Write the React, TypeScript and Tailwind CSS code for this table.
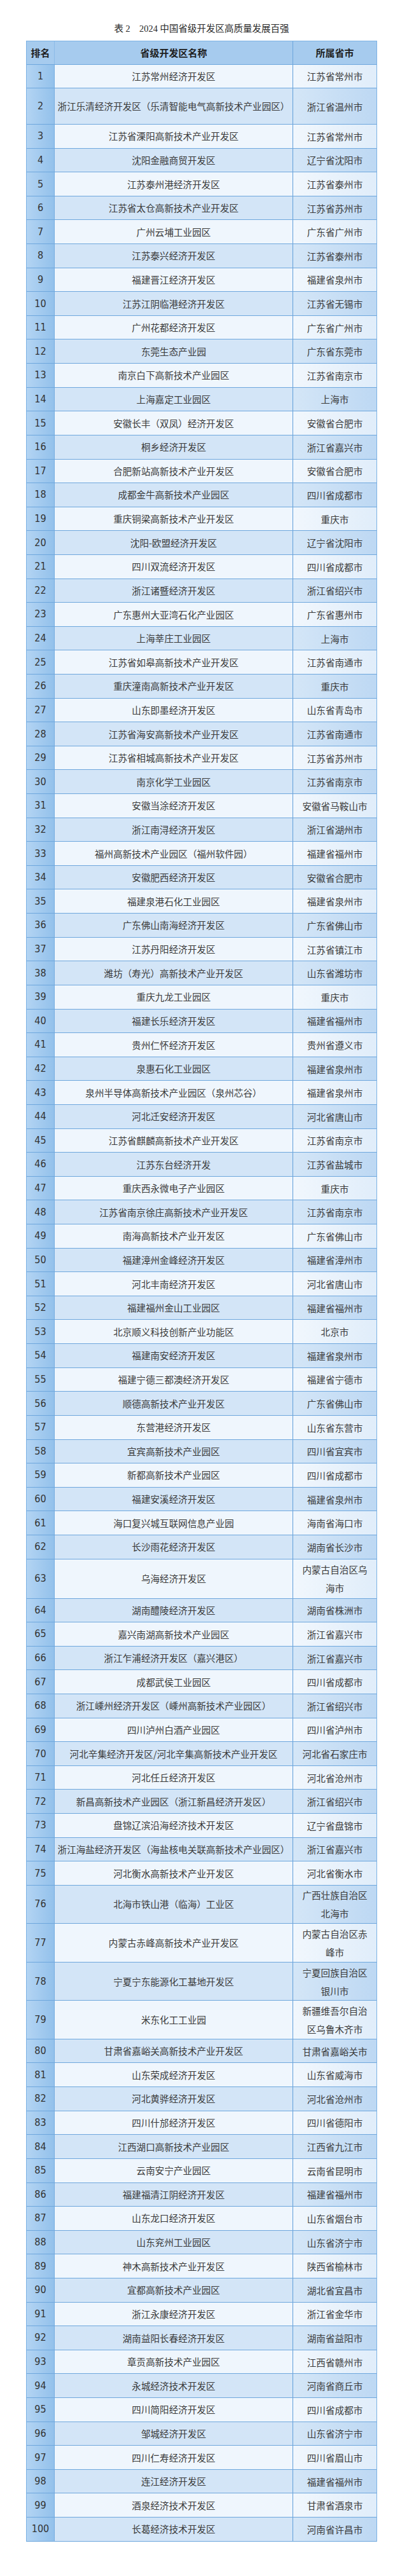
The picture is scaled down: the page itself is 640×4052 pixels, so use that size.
import React from 'react';

type Row = { rank: number; name: string; place: string; h?: string };

const rows: Row[] = [
  { rank: 1, name: '江苏常州经济开发区', place: '江苏省常州市' },
  { rank: 2, name: '浙江乐清经济开发区（乐清智能电气高新技术产业园区）', place: '浙江省温州市', h: 'h-[56.7px]' },
  { rank: 3, name: '江苏省溧阳高新技术产业开发区', place: '江苏省常州市' },
  { rank: 4, name: '沈阳金融商贸开发区', place: '辽宁省沈阳市' },
  { rank: 5, name: '江苏泰州港经济开发区', place: '江苏省泰州市' },
  { rank: 6, name: '江苏省太仓高新技术产业开发区', place: '江苏省苏州市' },
  { rank: 7, name: '广州云埔工业园区', place: '广东省广州市' },
  { rank: 8, name: '江苏泰兴经济开发区', place: '江苏省泰州市' },
  { rank: 9, name: '福建晋江经济开发区', place: '福建省泉州市' },
  { rank: 10, name: '江苏江阴临港经济开发区', place: '江苏省无锡市' },
  { rank: 11, name: '广州花都经济开发区', place: '广东省广州市' },
  { rank: 12, name: '东莞生态产业园', place: '广东省东莞市' },
  { rank: 13, name: '南京白下高新技术产业园区', place: '江苏省南京市' },
  { rank: 14, name: '上海嘉定工业园区', place: '上海市' },
  { rank: 15, name: '安徽长丰（双凤）经济开发区', place: '安徽省合肥市' },
  { rank: 16, name: '桐乡经济开发区', place: '浙江省嘉兴市' },
  { rank: 17, name: '合肥新站高新技术产业开发区', place: '安徽省合肥市' },
  { rank: 18, name: '成都金牛高新技术产业园区', place: '四川省成都市' },
  { rank: 19, name: '重庆铜梁高新技术产业开发区', place: '重庆市' },
  { rank: 20, name: '沈阳-欧盟经济开发区', place: '辽宁省沈阳市' },
  { rank: 21, name: '四川双流经济开发区', place: '四川省成都市' },
  { rank: 22, name: '浙江诸暨经济开发区', place: '浙江省绍兴市' },
  { rank: 23, name: '广东惠州大亚湾石化产业园区', place: '广东省惠州市' },
  { rank: 24, name: '上海莘庄工业园区', place: '上海市' },
  { rank: 25, name: '江苏省如皋高新技术产业开发区', place: '江苏省南通市' },
  { rank: 26, name: '重庆潼南高新技术产业开发区', place: '重庆市' },
  { rank: 27, name: '山东即墨经济开发区', place: '山东省青岛市' },
  { rank: 28, name: '江苏省海安高新技术产业开发区', place: '江苏省南通市' },
  { rank: 29, name: '江苏省相城高新技术产业开发区', place: '江苏省苏州市' },
  { rank: 30, name: '南京化学工业园区', place: '江苏省南京市' },
  { rank: 31, name: '安徽当涂经济开发区', place: '安徽省马鞍山市' },
  { rank: 32, name: '浙江南浔经济开发区', place: '浙江省湖州市' },
  { rank: 33, name: '福州高新技术产业园区（福州软件园）', place: '福建省福州市' },
  { rank: 34, name: '安徽肥西经济开发区', place: '安徽省合肥市' },
  { rank: 35, name: '福建泉港石化工业园区', place: '福建省泉州市' },
  { rank: 36, name: '广东佛山南海经济开发区', place: '广东省佛山市' },
  { rank: 37, name: '江苏丹阳经济开发区', place: '江苏省镇江市' },
  { rank: 38, name: '潍坊（寿光）高新技术产业开发区', place: '山东省潍坊市' },
  { rank: 39, name: '重庆九龙工业园区', place: '重庆市' },
  { rank: 40, name: '福建长乐经济开发区', place: '福建省福州市' },
  { rank: 41, name: '贵州仁怀经济开发区', place: '贵州省遵义市' },
  { rank: 42, name: '泉惠石化工业园区', place: '福建省泉州市' },
  { rank: 43, name: '泉州半导体高新技术产业园区（泉州芯谷）', place: '福建省泉州市' },
  { rank: 44, name: '河北迁安经济开发区', place: '河北省唐山市' },
  { rank: 45, name: '江苏省麒麟高新技术产业开发区', place: '江苏省南京市' },
  { rank: 46, name: '江苏东台经济开发', place: '江苏省盐城市' },
  { rank: 47, name: '重庆西永微电子产业园区', place: '重庆市' },
  { rank: 48, name: '江苏省南京徐庄高新技术产业开发区', place: '江苏省南京市' },
  { rank: 49, name: '南海高新技术产业开发区', place: '广东省佛山市' },
  { rank: 50, name: '福建漳州金峰经济开发区', place: '福建省漳州市' },
  { rank: 51, name: '河北丰南经济开发区', place: '河北省唐山市' },
  { rank: 52, name: '福建福州金山工业园区', place: '福建省福州市' },
  { rank: 53, name: '北京顺义科技创新产业功能区', place: '北京市' },
  { rank: 54, name: '福建南安经济开发区', place: '福建省泉州市' },
  { rank: 55, name: '福建宁德三都澳经济开发区', place: '福建省宁德市' },
  { rank: 56, name: '顺德高新技术产业开发区', place: '广东省佛山市' },
  { rank: 57, name: '东营港经济开发区', place: '山东省东营市' },
  { rank: 58, name: '宜宾高新技术产业园区', place: '四川省宜宾市' },
  { rank: 59, name: '新都高新技术产业园区', place: '四川省成都市' },
  { rank: 60, name: '福建安溪经济开发区', place: '福建省泉州市' },
  { rank: 61, name: '海口复兴城互联网信息产业园', place: '海南省海口市' },
  { rank: 62, name: '长沙雨花经济开发区', place: '湖南省长沙市' },
  { rank: 63, name: '乌海经济开发区', place: '内蒙古自治区乌|海市', h: 'h-[62px]' },
  { rank: 64, name: '湖南醴陵经济开发区', place: '湖南省株洲市' },
  { rank: 65, name: '嘉兴南湖高新技术产业园区', place: '浙江省嘉兴市' },
  { rank: 66, name: '浙江乍浦经济开发区（嘉兴港区）', place: '浙江省嘉兴市' },
  { rank: 67, name: '成都武侯工业园区', place: '四川省成都市' },
  { rank: 68, name: '浙江嵊州经济开发区（嵊州高新技术产业园区）', place: '浙江省绍兴市' },
  { rank: 69, name: '四川泸州白酒产业园区', place: '四川省泸州市' },
  { rank: 70, name: '河北辛集经济开发区/河北辛集高新技术产业开发区', place: '河北省石家庄市' },
  { rank: 71, name: '河北任丘经济开发区', place: '河北省沧州市' },
  { rank: 72, name: '新昌高新技术产业园区（浙江新昌经济开发区）', place: '浙江省绍兴市' },
  { rank: 73, name: '盘锦辽滨沿海经济技术开发区', place: '辽宁省盘锦市' },
  { rank: 74, name: '浙江海盐经济开发区（海盐核电关联高新技术产业园区）', place: '浙江省嘉兴市' },
  { rank: 75, name: '河北衡水高新技术产业开发区', place: '河北省衡水市' },
  { rank: 76, name: '北海市铁山港（临海）工业区', place: '广西壮族自治区|北海市', h: 'h-[60px]' },
  { rank: 77, name: '内蒙古赤峰高新技术产业开发区', place: '内蒙古自治区赤|峰市', h: 'h-[61px]' },
  { rank: 78, name: '宁夏宁东能源化工基地开发区', place: '宁夏回族自治区|银川市', h: 'h-[60.4px]' },
  { rank: 79, name: '米东化工工业园', place: '新疆维吾尔自治|区乌鲁木齐市', h: 'h-[60.6px]' },
  { rank: 80, name: '甘肃省嘉峪关高新技术产业开发区', place: '甘肃省嘉峪关市' },
  { rank: 81, name: '山东荣成经济开发区', place: '山东省威海市' },
  { rank: 82, name: '河北黄骅经济开发区', place: '河北省沧州市' },
  { rank: 83, name: '四川什邡经济开发区', place: '四川省德阳市' },
  { rank: 84, name: '江西湖口高新技术产业园区', place: '江西省九江市' },
  { rank: 85, name: '云南安宁产业园区', place: '云南省昆明市' },
  { rank: 86, name: '福建福清江阴经济开发区', place: '福建省福州市' },
  { rank: 87, name: '山东龙口经济开发区', place: '山东省烟台市' },
  { rank: 88, name: '山东兖州工业园区', place: '山东省济宁市' },
  { rank: 89, name: '神木高新技术产业开发区', place: '陕西省榆林市' },
  { rank: 90, name: '宜都高新技术产业园区', place: '湖北省宜昌市' },
  { rank: 91, name: '浙江永康经济开发区', place: '浙江省金华市' },
  { rank: 92, name: '湖南益阳长春经济开发区', place: '湖南省益阳市' },
  { rank: 93, name: '章贡高新技术产业园区', place: '江西省赣州市' },
  { rank: 94, name: '永城经济技术开发区', place: '河南省商丘市' },
  { rank: 95, name: '四川简阳经济开发区', place: '四川省成都市' },
  { rank: 96, name: '邹城经济开发区', place: '山东省济宁市' },
  { rank: 97, name: '四川仁寿经济开发区', place: '四川省眉山市' },
  { rank: 98, name: '连江经济开发区', place: '福建省福州市' },
  { rank: 99, name: '酒泉经济技术开发区', place: '甘肃省酒泉市' },
  { rank: 100, name: '长葛经济技术开发区', place: '河南省许昌市' },
];

const App = () => {
  return (
    <div className="min-h-[4052px] bg-white pt-[35px] font-[family-name:'Noto_Sans_CJK_SC',sans-serif]">
      {/* 标题 */}
      <div className="ml-[41px] w-[552px] h-[20px] flex items-center justify-center text-[14.5px] leading-[20px] text-[#2a2a2a] font-[family-name:'Liberation_Serif','Noto_Sans_CJK_SC',serif]">
        <span>表 2</span>
        <span className="ml-[14px]">2024 中国省级开发区高质量发展百强</span>
      </div>

      <div className="mt-[9px] ml-[41px] w-[552px] border-x border-t border-[#7db2e4]">
        {/* 表头 */}
        <div className="flex h-[36.7px] border-b border-[#6ea7dd] bg-[#a6cbee] font-bold text-[15px] text-[#1e1e1e]">
          <div className="w-[44px] shrink-0 flex items-center justify-center border-r border-[#8bbbe7]">排名</div>
          <div className="w-[374px] shrink-0 flex items-center justify-center">省级开发区名称</div>
          <div className="w-[132px] shrink-0 flex items-center justify-center border-l border-[#6aa5dc]">所属省市</div>
        </div>

        {rows.map((r) => {
          const even = r.rank % 2 === 0;
          return (
            <div key={r.rank} className={`flex border-b border-[#6ea7dd] ${r.h ?? 'h-[37.62px]'}`}>
              <div className="w-[44px] shrink-0 flex items-center justify-center border-r border-[#74abdf] bg-linear-to-r from-[#b3d4f3] to-[#93c1eb] text-[16px] text-[#333] font-[family-name:'Liberation_Sans_Narrow','DejaVu_Sans_Condensed',sans-serif]">
                {r.rank}
              </div>
              <div
                className={`w-[374px] shrink-0 flex items-center justify-center whitespace-nowrap text-[14.6px] text-[#3a3a3a] ${
                  even ? 'bg-[#d3e5f7]' : 'bg-[#eff6fd]'
                }`}
              >
                {r.name}
              </div>
              <div
                className={`w-[132px] shrink-0 flex flex-col items-center justify-center whitespace-nowrap text-[14.6px] leading-[29px] text-[#3a3a3a] border-l border-[#5f9dd9] ${
                  even ? 'bg-linear-to-r from-[#d4e6f7] to-[#bdd8f3]' : 'bg-linear-to-r from-[#f1f7fd] to-[#e0edfa]'
                }`}
              >
                {r.place.split('|').map((line, i) => (
                  <span key={i}>{line}</span>
                ))}
              </div>
            </div>
          );
        })}
      </div>
    </div>
  );
};

export default App;
